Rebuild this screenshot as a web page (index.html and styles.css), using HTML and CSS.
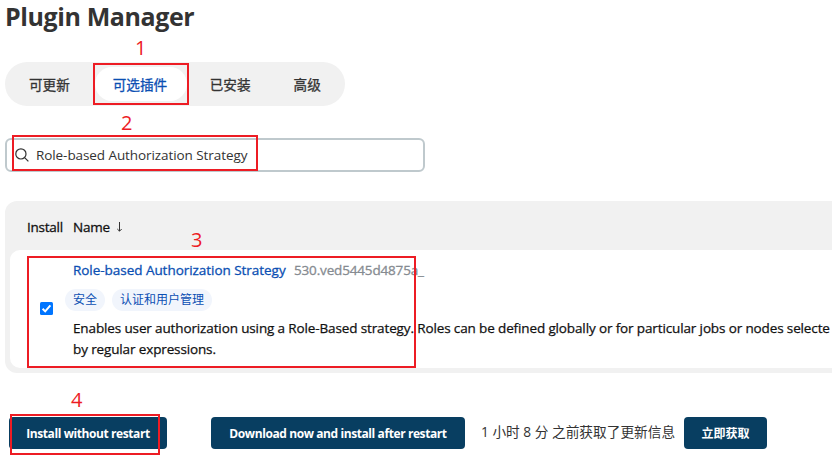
FILE: index.html
```html
<!DOCTYPE html>
<html lang="zh-CN">
<head>
<meta charset="utf-8">
<title>Plugin Manager</title>
<link rel="stylesheet" href="styles.css">
</head>
<body>
<main class="page">
  <h1 class="title"><span>Plugin Manager</span></h1>
  <nav class="tabs">
    <a class="tab">可更新</a>
    <a class="tab tab-active">可选插件</a>
    <a class="tab">已安装</a>
    <a class="tab">高级</a>
  </nav>
  <div class="search">
    <svg class="search-icon" viewBox="0 0 14 14" width="14" height="14"><circle cx="5.9" cy="5.9" r="5.1"/><path d="M9.6 9.6 13.4 13.4"/></svg>
    <span class="search-text">Role-based Authorization Strategy</span>
  </div>
  <section class="table">
    <header class="table-head">
      <span class="col-install">Install</span>
      <span class="col-name">Name</span>
      <svg class="sort" viewBox="0 0 7 10" width="7" height="10"><path d="M3.5 0V9M1.3 7 3.5 9.2 5.7 7"/></svg>
    </header>
    <div class="row">
      <div class="check"><svg viewBox="0 0 13 13" width="13" height="13"><rect width="13" height="13" rx="1.5"/><path d="M2.6 6.8 5.2 9.4 10.4 3.4"/></svg></div>
      <div class="info">
        <div class="name-line"><a class="plugin">Role-based Authorization Strategy</a><span class="version">530.ved5445d4875a_</span></div>
        <div class="tags"><span class="tag">安全</span><span class="tag">认证和用户管理</span></div>
        <p class="desc">Enables user authorization using a Role-Based strategy. Roles can be defined globally or for particular jobs or nodes selecte<br>by regular expressions.</p>
      </div>
    </div>
  </section>
  <footer class="actions">
    <button class="btn btn-install">Install without restart</button>
    <button class="btn btn-download">Download now and install after restart</button>
    <span class="updated">1 小时 8 分 之前获取了更新信息</span>
    <button class="btn btn-check">立即获取</button>
  </footer>
  <div class="mark mark-1"><b>1</b></div>
  <div class="mark mark-2"><b>2</b></div>
  <div class="mark mark-3"><b>3</b></div>
  <div class="mark mark-4"><b>4</b></div>
</main>
</body>
</html>
```
FILE: styles.css
```css
* { box-sizing: border-box; }
body {
  margin: 0;
  background: #fff;
  color: #333;
  font-family: "Open Sans", "Noto Sans CJK SC", sans-serif;
  font-size: 14px;
}
.page {
  position: relative;
  width: 832px;
  height: 467px;
  overflow: hidden;
  padding-left: 5px;
  white-space: nowrap;
}
.title {
  margin: 0;
  height: 62px;
  font-size: 25px;
  line-height: 32px;
  font-weight: 700;
  letter-spacing: -0.4px;
}
.tabs {
  display: flex;
  width: 340px;
  height: 44px;
  padding: 5px;
  border-radius: 22px;
  background: #f1f1f1;
}
.tab {
  padding: 0 20px 0 19px;
  margin-right: 4px;
  line-height: 35px;
  border-radius: 17px;
  font-size: 13.6px;
  -webkit-text-stroke: 0.3px;
}
.tab:first-child { margin-right: 5px; }
.tab-active { width: 92px; padding-left: 18px; background: #fff; color: #0b4fb3; }
.search {
  display: flex;
  align-items: center;
  width: 420px;
  height: 34px;
  margin-top: 32px;
  padding-left: 8px;
  border: 2px solid #bfc9cd;
  border-radius: 6px;
}
.search-icon { fill: none; stroke: #333; stroke-width: 1.2; }
.search-text { margin-left: 7px; font-size: 13.5px; letter-spacing: -0.08px; }
.table {
  width: 840px;
  height: 172px;
  margin-top: 29px;
  padding: 0 0 5px 5px;
  border-radius: 12px;
  background: #f1f1f1;
  color: #111;
}
.table-head {
  display: flex;
  align-items: center;
  height: 49px;
  padding: 3px 0 0 17px;
  font-size: 13.5px;
  letter-spacing: -0.25px;
  -webkit-text-stroke: 0.3px;
}
.col-install { width: 46px; }
.col-name { width: 43px; }
.sort { fill: none; stroke: #333; stroke-width: 1; }
.row {
  display: flex;
  height: 118px;
  border-radius: 10px;
  background: #fff;
}
.check { flex: 0 0 63px; padding: 52px 0 0 30px; }
.check svg { display: block; fill: #0075ff; }
.check path { fill: none; stroke: #fff; stroke-width: 2; }
.info { padding-top: 9px; }
.name-line {
  display: flex;
  height: 22px;
  line-height: 22px;
  font-size: 13.5px;
  letter-spacing: -0.04px;
  -webkit-text-stroke: 0.3px;
}
.plugin { width: 221px; color: #0b4fb3; }
.version { color: #868b91; letter-spacing: -0.16px; }
.tags { display: flex; gap: 7px; margin: 8px 0 0 -8px; }
.tag {
  height: 22px;
  padding: 0 8px;
  border-radius: 11px;
  background: #f1f5fc;
  color: #0b4fb3;
  font-size: 12px;
  line-height: 22px;
}
.desc {
  margin: 7px 0 0;
  line-height: 21px;
  font-size: 13.5px;
  letter-spacing: -0.13px;
  -webkit-text-stroke: 0.25px;
}
.actions { display: flex; height: 32px; margin-top: 44px; padding-left: 4px; }
.btn {
  height: 32px;
  padding: 0;
  border: 0;
  border-radius: 4px;
  background: #083e61;
  color: #fff;
  font: 700 12px/33px "Open Sans", "Noto Sans CJK SC", sans-serif;
  letter-spacing: -0.41px;
}
.btn-install { width: 158px; }
.btn-download { width: 254px; margin-left: 44px; }
.btn-check { width: 83px; letter-spacing: 0; }
.updated { width: 219px; padding-left: 16px; line-height: 30px; font-size: 13.7px; }
.mark { position: absolute; border: 2px solid #ed1c24; }
.mark b {
  position: absolute;
  color: #ed1c24;
  font-size: 20px;
  line-height: 24px;
  font-weight: 400;
}
.mark-1 { left: 93px; top: 63px; width: 96px; height: 42px; }
.mark-1 b { left: 40px; top: -29px; }
.mark-2 { left: 12px; top: 135px; width: 246px; height: 36px; }
.mark-2 b { left: 107px; top: -26px; }
.mark-3 { left: 27px; top: 256px; width: 389px; height: 112px; }
.mark-3 b { left: 162px; top: -30px; }
.mark-4 { left: 10px; top: 414px; width: 150px; height: 41px; }
.mark-4 b { left: 59px; top: -28px; }
```
